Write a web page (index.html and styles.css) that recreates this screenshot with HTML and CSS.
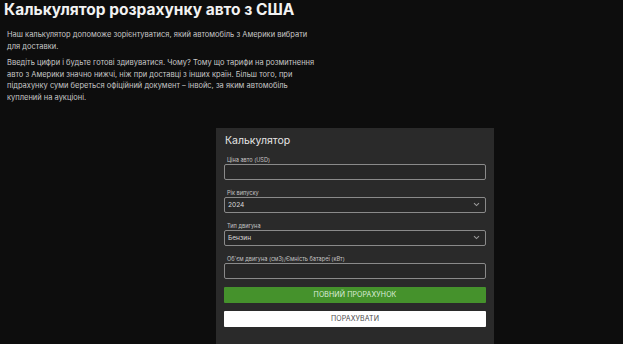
FILE: index.html
```html
<!DOCTYPE html>
<html lang="uk">
<head>
    <meta charset="UTF-8">
    <meta name="viewport" content="width=device-width, initial-scale=1.0">
    <title>Калькулятор розрахунку авто з США</title>
    <link rel="stylesheet" href="styles.css">
</head>
<body>
    <div class="page">
        <h1 class="title">Калькулятор розрахунку авто з США</h1>

        <div class="intro">
            <p>Наш калькулятор допоможе зорієнтуватися, який автомобіль з Америки вибрати для доставки.</p>
            <p>Введіть цифри і будьте готові здивуватися. Чому? Тому що тарифи на розмитнення авто з Америки значно нижчі, ніж при доставці з інших країн. Більш того, при підрахунку суми береться офіційний документ – інвойс, за яким автомобіль куплений на аукціоні.</p>
        </div>

        <div class="calc-row">
            <div class="calc">
                <div class="calc-title">Калькулятор</div>

                <div class="field">
                    <label class="field-label">Ціна авто (USD)</label>
                    <div class="field-box"></div>
                </div>

                <div class="field">
                    <label class="field-label">Рік випуску</label>
                    <div class="field-box select">
                        <span>2024</span>
                        <svg width="7" height="5" viewBox="0 0 7 5"><path d="M1 1.2 L3.5 3.6 L6 1.2" fill="none" stroke="#9a9a9a" stroke-width="1.1"/></svg>
                    </div>
                </div>

                <div class="field">
                    <label class="field-label">Тип двигуна</label>
                    <div class="field-box select">
                        <span>Бензин</span>
                        <svg width="7" height="5" viewBox="0 0 7 5"><path d="M1 1.2 L3.5 3.6 L6 1.2" fill="none" stroke="#9a9a9a" stroke-width="1.1"/></svg>
                    </div>
                </div>

                <div class="field">
                    <label class="field-label">Об'єм двигуна (см3)/Ємність батареї (кВт)</label>
                    <div class="field-box"></div>
                </div>

                <button class="btn btn-green">ПОВНИЙ ПРОРАХУНОК</button>
                <button class="btn btn-white">ПОРАХУВАТИ</button>
            </div>
        </div>
    </div>
</body>
</html>
```

FILE: styles.css
```css
* {
    margin: 0;
    padding: 0;
    box-sizing: border-box;
}

body {
    background: #0d0d0d;
    color: #d4d4d4;
    font-family: 'Inter', 'Noto Sans', sans-serif;
    overflow: hidden;
}

.page {
    padding: 0 4px;
}

.title {
    font-size: 15.5px;
    line-height: 20px;
    font-weight: 700;
    color: #f2f2f2;
}

.intro {
    padding: 9px 3px 0;
    width: 319px;
}

.intro p {
    font-size: 7.5px;
    line-height: 11.6px;
    color: #c8c8c8;
    margin-bottom: 5px;
}

.calc-row {
    padding-left: 212px;
    padding-top: 19px;
}

.calc {
    width: 278px;
    background: #2a2a2a;
    padding: 6px 8px 30px;
}

.calc-title {
    font-size: 10.5px;
    line-height: 14px;
    color: #e6e6e6;
    margin-bottom: 9px;
    padding-left: 1px;
}

.field {
    margin-bottom: 10px;
}

.field-label {
    display: block;
    font-size: 5.6px;
    line-height: 7px;
    color: #c4c4c4;
    padding-left: 3px;
}

.field-box {
    height: 16px;
    border: 1px solid #8a8a8a;
    border-radius: 2px;
    background: #272727;
}

.select {
    display: flex;
    align-items: center;
    justify-content: space-between;
    padding: 0 5px 0 3px;
    font-size: 6.6px;
    color: #d8d8d8;
}

.btn {
    display: block;
    width: 100%;
    height: 16px;
    border: none;
    border-radius: 1px;
    font-family: 'Inter', 'Noto Sans', sans-serif;
    font-size: 7px;
    letter-spacing: 0.1px;
}

.btn-green {
    background: #45922c;
    color: #dfeedd;
    margin-top: -2px;
    margin-bottom: 8px;
}

.btn-white {
    background: #ffffff;
    color: #4a4a4a;
}
```
